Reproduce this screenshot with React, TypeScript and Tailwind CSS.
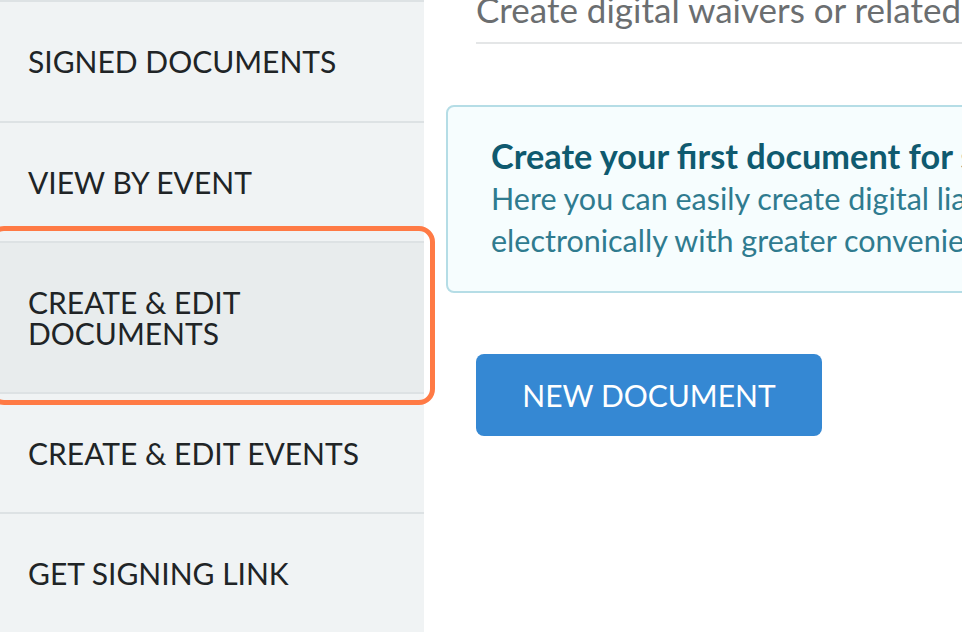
import React from "react";

const rowBase =
  "flex items-center pl-[28px] pr-4 border-b-2 border-[#dde2e4] text-[30px] leading-[30px] text-[#202426]";

export default function App() {
  return (
    <div
      className="relative flex h-[632px] w-[962px] overflow-hidden bg-white"
      style={{ fontFamily: "Lato, 'Open Sans', sans-serif" }}
    >
      {/* Sidebar */}
      <div className="flex w-[424px] shrink-0 flex-col bg-[#f0f3f4]">
        <div className={`${rowBase} h-[123px] border-t-2`}>SIGNED DOCUMENTS</div>
        <div className={`${rowBase} h-[120px]`}>VIEW BY EVENT</div>
        <div className={`${rowBase} h-[152px] bg-[#e8eced]`}>
          <span className="leading-[31px]">
            CREATE &amp; EDIT
            <br />
            DOCUMENTS
          </span>
        </div>
        <div className={`${rowBase} h-[120px]`}>CREATE &amp; EDIT EVENTS</div>
        <div className="flex h-[118px] items-center pl-[28px] text-[30px] leading-[30px] text-[#202426]">
          GET SIGNING LINK
        </div>
      </div>

      {/* Main content */}
      <div className="flex min-w-0 flex-1 flex-col overflow-hidden pl-[52px]">
        <div className="mt-[-13px] whitespace-nowrap border-b-2 border-[#e4e6e7] pb-[11px] text-[35px] leading-[44px] text-[#6b6e70]">
          Create digital waivers or related documents for your events
        </div>

        <div className="ml-[-30px] mt-[61px] w-[600px] shrink-0 rounded-[8px] border-2 border-[#b5dde6] bg-[#f6fdfe] pb-[30px] pl-[43px] pt-[28px]">
          <div className="whitespace-nowrap text-[34.3px] font-bold leading-[42px] text-[#0f5a6f]">
            Create your first document for signing
          </div>
          <div className="whitespace-nowrap text-[30.5px] leading-[42px] text-[#2f7b8f]">
            Here you can easily create digital liability waivers and forms
          </div>
          <div className="whitespace-nowrap text-[30.5px] leading-[42px] text-[#2f7b8f]">
            electronically with greater convenience and security.
          </div>
        </div>

        <div className="mt-[61px]">
          <button className="flex h-[82px] w-[346px] items-center justify-center rounded-[8px] bg-[#3588d3] text-[30px] text-white">
            NEW DOCUMENT
          </button>
        </div>
      </div>

      {/* Highlight annotation */}
      <div className="pointer-events-none absolute left-[-12px] top-[226px] h-[179px] w-[447px] rounded-[16px] border-[5px] border-[#ff7a45]" />
    </div>
  );
}
